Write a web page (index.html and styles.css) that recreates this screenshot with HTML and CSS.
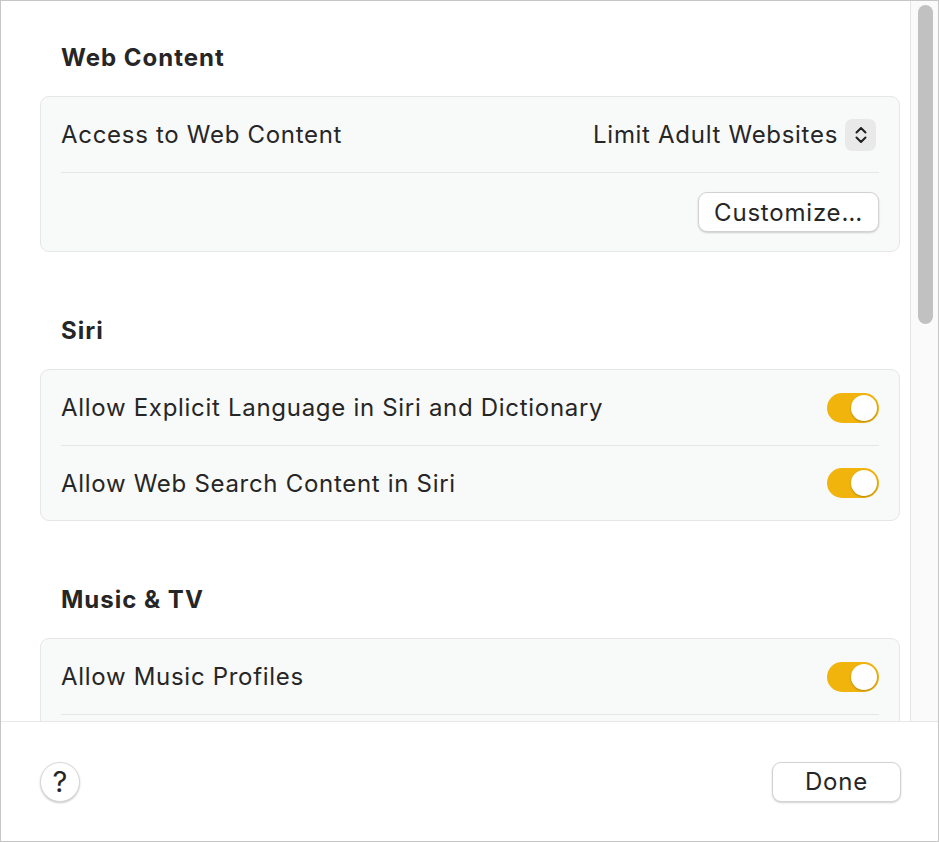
FILE: index.html
```html
<!DOCTYPE html>
<html lang="en">
<head>
<meta charset="utf-8">
<title>Content &amp; Privacy</title>
<link rel="stylesheet" href="styles.css">
</head>
<body>
<div class="window">
  <main class="content">
    <section class="section">
      <h2 class="section-title">Web Content</h2>
      <div class="card">
        <div class="row">
          <span class="label">Access to Web Content</span>
          <div class="popup">
            <span class="popup-value">Limit Adult Websites</span>
            <span class="stepper">
              <svg width="14" height="20" viewBox="0 0 14 20" aria-hidden="true">
                <path d="M2.5 7.5 L7 3 L11.5 7.5" fill="none" stroke="#1f1f1f" stroke-width="2" stroke-linecap="round" stroke-linejoin="round"/>
                <path d="M2.5 12.5 L7 17 L11.5 12.5" fill="none" stroke="#1f1f1f" stroke-width="2" stroke-linecap="round" stroke-linejoin="round"/>
              </svg>
            </span>
          </div>
        </div>
        <div class="row row-button">
          <button class="btn btn-customize" type="button">Customize…</button>
        </div>
      </div>
    </section>

    <section class="section">
      <h2 class="section-title">Siri</h2>
      <div class="card">
        <div class="row">
          <span class="label">Allow Explicit Language in Siri and Dictionary</span>
          <span class="toggle"><span class="knob"></span></span>
        </div>
        <div class="row">
          <span class="label">Allow Web Search Content in Siri</span>
          <span class="toggle"><span class="knob"></span></span>
        </div>
      </div>
    </section>

    <section class="section">
      <h2 class="section-title">Music &amp; TV</h2>
      <div class="card">
        <div class="row">
          <span class="label">Allow Music Profiles</span>
          <span class="toggle"><span class="knob"></span></span>
        </div>
        <div class="row"></div>
      </div>
    </section>

    <div class="scrolltrack"><div class="scrollthumb"></div></div>
  </main>
  <footer class="footer">
    <button class="help" type="button">?</button>
    <button class="btn btn-done" type="button">Done</button>
  </footer>
</div>
</body>
</html>
```

FILE: styles.css
```css
* { box-sizing: border-box; }

html, body {
  margin: 0;
  padding: 0;
  background: #ffffff;
}

body {
  font-family: Inter, "Noto Sans", "Liberation Sans", sans-serif;
  color: #262626;
}

.window {
  width: 939px;
  height: 842px;
  border: 1px solid #c6c6c6;
  display: flex;
  flex-direction: column;
  background: #ffffff;
  overflow: hidden;
}

.content {
  position: relative;
  flex: 1;
  overflow: hidden;
  padding: 43px 38px 0 39px;
}

.section {
  margin-bottom: 65px;
}

.section-title {
  margin: 0 0 24px 21px;
  font-size: 24px;
  line-height: 28px;
  font-weight: 700;
  color: #262626;
  letter-spacing: 1px;
}

.card {
  background: #f8f9f9;
  border: 1px solid #e6e6e6;
  border-radius: 9px;
  padding: 0 20px;
}

.row {
  display: flex;
  align-items: center;
  justify-content: space-between;
  min-height: 75px;
}

.row + .row {
  border-top: 1px solid #e6e6e6;
}

.row-button {
  justify-content: flex-end;
  min-height: 79px;
}

.label,
.popup-value {
  font-size: 24px;
  color: #262626;
  letter-spacing: 0.7px;
}

.popup {
  display: flex;
  align-items: center;
  gap: 7px;
  margin-right: 3px;
}

.stepper {
  width: 31px;
  height: 32px;
  border-radius: 7px;
  background: #e9e9e9;
  display: flex;
  align-items: center;
  justify-content: center;
}

.btn {
  font-family: inherit;
  font-size: 24px;
  color: #262626;
  background: #ffffff;
  border: 0.5px solid #d2d2d2;
  border-radius: 9px;
  box-shadow: 0 1px 2px rgba(0, 0, 0, 0.18);
  height: 40px;
  padding: 0 10px;
  letter-spacing: 0.8px;
}

.btn-customize {
  width: 181px;
}

.toggle {
  position: relative;
  width: 52px;
  height: 30px;
  border-radius: 15px;
  background: #f0b40c;
  flex: none;
}

.knob {
  position: absolute;
  right: 2px;
  top: 2px;
  width: 26px;
  height: 26px;
  border-radius: 50%;
  background: #ffffff;
  box-shadow: 0 1px 2px rgba(0, 0, 0, 0.25);
}

.scrolltrack {
  position: absolute;
  top: 0;
  right: 0;
  bottom: 0;
  width: 28px;
  background: #fafafa;
  border-left: 1px solid #e4e4e4;
}

.scrollthumb {
  margin: 4px 0 0 7px;
  width: 15px;
  height: 319px;
  border-radius: 8px;
  background: #c1c1c1;
}

.footer {
  flex: none;
  height: 120px;
  border-top: 1px solid #e8e8e8;
  display: flex;
  align-items: center;
  justify-content: space-between;
  padding: 0 37px 0 39px;
  background: #ffffff;
}

.help {
  width: 40px;
  height: 40px;
  border-radius: 50%;
  background: #ffffff;
  border: 0.5px solid #d8d8d8;
  box-shadow: 0 1px 2px rgba(0, 0, 0, 0.22);
  font-family: inherit;
  font-size: 29px;
  font-weight: 400;
  line-height: 1;
  color: #262626;
  padding: 0 0 1px 0;
  display: flex;
  align-items: center;
  justify-content: center;
}

.btn-done {
  width: 129px;
}
```
